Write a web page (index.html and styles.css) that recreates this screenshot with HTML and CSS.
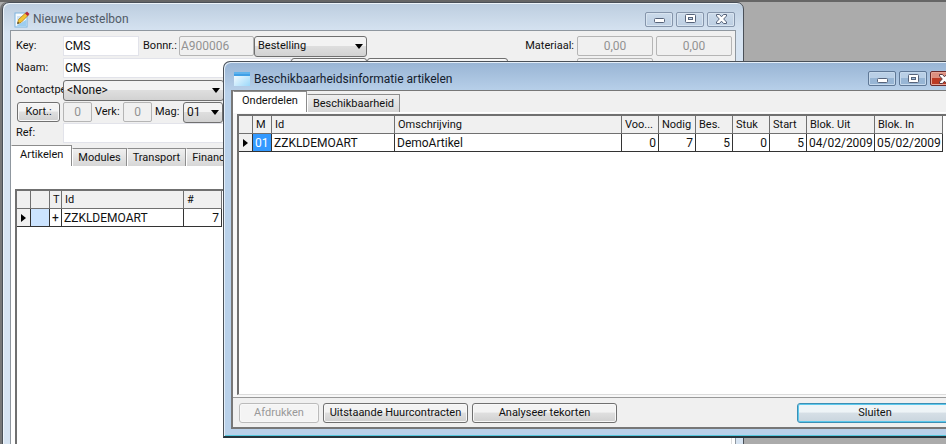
FILE: index.html
```
<!DOCTYPE html>
<html lang="nl">
<head>
  <meta charset="UTF-8">
  <title>Nieuwe bestelbon</title>
  <link rel="stylesheet" href="styles.css">
</head>
<body>
  <main class="desktop">

    <!-- order window -->
    <section class="window order">
      <header class="titlebar">
        <svg class="app-icon" width="16" height="17" viewBox="0 0 16 17">
          <rect x="1" y="2" width="12" height="14" fill="#f6fbff" stroke="#7fb4de"/>
          <path d="M3 6h6M3 8h5M3 13h8" stroke="#a9cdea"/>
          <path d="M1.500 15.500h11v-7z" fill="#9ccdf0"/>
          <path d="M3.500 12.500l1-4 7-6.500 2.500 2.500-7 7z" fill="#f4c431" stroke="#a87b1c" stroke-width=".8"/>
          <path d="M11 2.500l2-2 2.500 2.500-2 2z" fill="#b5283c"/>
          <path d="M3.300 12.700l.5-2 1.500 1.500z" fill="#333"/>
        </svg>
        <h1>Nieuwe bestelbon</h1>
        <div class="window-buttons">
          <button aria-label="Minimaliseren"><svg width="13" height="12" viewBox="0 0 13 12"><rect x="1.500" y="5.500" width="10" height="4" rx="1" fill="#fff" stroke="#56637a"/></svg></button>
          <button aria-label="Maximaliseren"><svg width="13" height="12" viewBox="0 0 13 12"><rect x="1.500" y="1.500" width="10" height="8" rx="1" fill="#fff" stroke="#56637a"/><rect x="4.500" y="4.500" width="4" height="2" fill="#c6d8ea" stroke="#56637a"/></svg></button>
          <button aria-label="Sluiten"><svg width="13" height="12" viewBox="0 0 13 12"><path d="M1.500 1.500h3l2 2.300 2-2.300h3v1.500L8.700 6l2.800 3v1.500h-3l-2-2.300-2 2.300h-3V9l2.800-3-2.800-3z" fill="#fff" stroke="#56637a"/></svg></button>
        </div>
      </header>

      <div class="client">
        <form class="order-form">
          <div class="row">
            <label class="name" for="key">Key:</label>
            <input class="w-key" id="key" type="text" value="CMS">
            <label class="bon-label" for="bon">Bonnr.:</label>
            <input class="w-bon" id="bon" type="text" value="A900006" disabled>
            <span class="select w-type"><select aria-label="Type"><option>Bestelling</option></select></span>
            <div class="totals">
              <label for="mat">Materiaal:</label>
              <input class="amount" id="mat" type="text" value="0,00" disabled>
              <input class="amount" type="text" value="0,00" aria-label="Materiaal totaal" disabled>
            </div>
          </div>
          <div class="row">
            <label class="name" for="naam">Naam:</label>
            <input class="w-naam" id="naam" type="text" value="CMS">
            <button class="btn w-key" type="button" aria-label="Zoeken"></button>
            <button class="btn w-info" type="button" aria-label="Info"></button>
            <div class="totals">
              <input class="amount" type="text" aria-label="Transport" disabled>
              <span class="amount"></span>
            </div>
          </div>
          <div class="row">
            <label class="name" for="contact">Contactpersoon:</label>
            <span class="select w-contact"><select id="contact"><option>&lt;None&gt;</option></select></span>
          </div>
          <div class="row">
            <span class="name"><button class="btn kort" type="button">Kort.:</button></span>
            <input class="num" type="text" value="0" aria-label="Korting" disabled>
            <label class="small-label" for="verk">Verk:</label>
            <input class="num" id="verk" type="text" value="0" disabled>
            <label class="small-label" for="mag">Mag:</label>
            <span class="select w-mag"><select id="mag"><option>01</option></select></span>
          </div>
          <div class="row">
            <label class="name" for="ref">Ref:</label>
            <input class="w-ref" id="ref" type="text">
          </div>
        </form>

        <nav class="tabs">
          <button class="tab active">Artikelen</button>
          <button class="tab">Modules</button>
          <button class="tab">Transport</button>
          <button class="tab">Financieel</button>
        </nav>
        <div class="tab-page order-page">
          <div class="grid-frame">
            <table class="grid order-grid">
              <colgroup><col class="c-mark"><col class="c-color"><col class="c-t"><col class="c-article"><col class="c-count"></colgroup>
              <thead>
                <tr><th></th><th></th><th>T</th><th>Id</th><th>#</th></tr>
              </thead>
              <tbody>
                <tr>
                  <td><i class="marker"></i></td>
                  <td class="blue"></td>
                  <td>+</td>
                  <td>ZZKLDEMOART</td>
                  <td class="right">7</td>
                </tr>
              </tbody>
            </table>
          </div>
        </div>
      </div>
    </section>

    <!-- availability window -->
    <section class="window stock">
      <header class="titlebar">
        <svg class="app-icon" width="16" height="14" viewBox="0 0 16 14">
          <defs>
            <linearGradient id="pane" x1="0" y1="0" x2="1" y2="1">
              <stop offset="0" stop-color="#fff"/>
              <stop offset="1" stop-color="#9bd8fa"/>
            </linearGradient>
          </defs>
          <rect width="16" height="14" fill="url(#pane)"/>
          <rect width="16" height="4" fill="#3f9fe6"/>
          <path d="M0 1h16" stroke="#7fc6f5"/>
        </svg>
        <h1>Beschikbaarheidsinformatie artikelen</h1>
        <div class="window-buttons">
          <button aria-label="Minimaliseren"><svg width="13" height="12" viewBox="0 0 13 12"><rect x="1.500" y="5.500" width="10" height="4" rx="1" fill="#fff" stroke="#56637a"/></svg></button>
          <button aria-label="Maximaliseren"><svg width="13" height="12" viewBox="0 0 13 12"><rect x="1.500" y="1.500" width="10" height="8" rx="1" fill="#fff" stroke="#56637a"/><rect x="4.500" y="4.500" width="4" height="2" fill="#9dbbd9" stroke="#56637a"/></svg></button>
          <button class="close" aria-label="Venster sluiten"><svg width="13" height="12" viewBox="0 0 13 12"><path d="M1.500 1.500h3l2 2.300 2-2.300h3v1.500L8.700 6l2.800 3v1.500h-3l-2-2.300-2 2.300h-3V9l2.800-3-2.800-3z" fill="#fff" stroke="#5a3a44"/></svg></button>
        </div>
      </header>

      <div class="client">
        <nav class="tabs">
          <button class="tab active">Onderdelen</button>
          <button class="tab">Beschikbaarheid</button>
        </nav>
        <div class="tab-page">
          <div class="grid-frame">
            <table class="grid stock-grid">
              <colgroup><col class="c-mark"><col class="c-m"><col class="c-id"><col class="c-desc"><col class="c-qty"><col class="c-qty"><col class="c-qty"><col class="c-qty"><col class="c-qty"><col class="c-date"><col class="c-date"></colgroup>
              <thead>
                <tr>
                  <th></th><th>M</th><th>Id</th><th>Omschrijving</th><th>Voo...</th><th>Nodig</th>
                  <th>Bes.</th><th>Stuk</th><th>Start</th><th>Blok. Uit</th><th>Blok. In</th>
                </tr>
              </thead>
              <tbody>
                <tr>
                  <td><i class="marker"></i></td>
                  <td class="selected">01</td>
                  <td>ZZKLDEMOART</td>
                  <td>DemoArtikel</td>
                  <td class="right">0</td>
                  <td class="right">7</td>
                  <td class="right">5</td>
                  <td class="right">0</td>
                  <td class="right">5</td>
                  <td>04/02/2009</td>
                  <td>05/02/2009</td>
                </tr>
              </tbody>
            </table>
          </div>
        </div>
        <footer class="actions">
          <button class="btn print" disabled>Afdrukken</button>
          <button class="btn action">Uitstaande Huurcontracten</button>
          <button class="btn action">Analyseer tekorten</button>
          <button class="btn default">Sluiten</button>
        </footer>
      </div>
    </section>

  </main>
</body>
</html>
```
FILE: styles.css
```
* {
  box-sizing: border-box;
}

body {
  margin: 0;
  font-family: Roboto, "Liberation Sans", sans-serif;
  font-size: 11px;
  line-height: 16px;
  color: #111;
}

button,
input,
select {
  font: inherit;
  color: inherit;
  margin: 0;
}

.desktop {
  position: relative;
  height: 100vh;
  overflow: hidden;
  background: #ababab;
  border-top: 2px solid #666;
}

/* windows */
.window {
  position: absolute;
  display: flex;
  flex-direction: column;
  border: 1px solid #4a5058;
  border-radius: 7px 7px 0 0;
}

.order {
  left: 2px;
  right: 202px;
  top: 0;
  bottom: -16px;
  padding: 0 7px 7px;
  background: linear-gradient(#bccddf, #d7e4f2 30px);
  box-shadow: inset 1px 1px #edf4fa, -2px 0 #777;
}

.stock {
  left: 223px;
  right: -21px;
  top: 59px;
  bottom: 6px;
  padding: 0 7px 7px;
  background: linear-gradient(#98b4d4, #b9d1ea 30px);
  border-bottom: 2px solid #26363e;
  box-shadow: inset 1px 1px #e4eef8, inset 0 -1px #54c8de;
}

.titlebar {
  display: flex;
  align-items: center;
  height: 27px;
  padding: 5px 0 0 4px;
}

.titlebar h1 {
  flex: 1;
  margin: 0 0 0 3px;
  font-size: 12px;
  font-weight: 400;
  color: #505a66;
}

.stock .titlebar h1 {
  color: #14202e;
  margin-left: 4px;
}

.stock .titlebar {
  height: 28px;
  padding-left: 3px;
}

.window-buttons {
  display: flex;
  gap: 3px;
  padding-right: 1px;
}

.window-buttons button {
  display: flex;
  align-items: center;
  justify-content: center;
  width: 28px;
  height: 15px;
  padding: 0;
  border: 1px solid #8595ab;
  border-radius: 2px;
  background: linear-gradient(#cbdaea, #bccee2);
  box-shadow: inset 0 0 0 1px #d8e4f0;
}

.stock .window-buttons button {
  border-color: #5f7896;
  background: linear-gradient(#b9cfe6 50%, #98b6d5 50%);
  box-shadow: inset 0 0 0 1px #c6d9ec;
}

.stock .window-buttons .close {
  border-color: #6b2a2c;
  background: linear-gradient(#dc8f80 50%, #bb3a24 50%);
  box-shadow: inset 0 0 0 1px #e5a597;
}

.client {
  flex: 1;
  display: flex;
  flex-direction: column;
  min-height: 0;
  border: 1px solid #8f979f;
  background: #f0f0f0;
}

.stock .client {
  border: 2px solid #777;
  border-width: 1px 2px 2px;
}

/* order form */
.order-form {
  padding: 4px 3px 2px 5px;
}

.row {
  display: flex;
  align-items: center;
  height: 22px;
}

.row:last-child {
  height: 20px;
}

.name {
  flex: none;
  width: 47px;
  overflow: hidden;
  white-space: nowrap;
}

input {
  height: 20px;
  min-width: 0;
  padding: 0 1px;
  border: 1px solid #e2e3ea;
  background: #fff;
  font-size: 12px;
}

input:disabled {
  border-color: #b5b5b5;
  border-radius: 2px;
  background: #f0f0f0;
  color: #929292;
}

.w-key { width: 76px; }
.w-bon { width: 75px; }
.w-type { width: 113px; }
.w-naam { width: 228px; }
.w-info { width: 141px; }
.w-contact { width: 161px; }
.w-mag { width: 40px; }
.w-ref { width: 228px; }

.bon-label {
  width: 40px;
  padding-left: 4px;
}

.num {
  width: 29px;
  text-align: center;
}

.small-label {
  width: 31px;
  padding-left: 3px;
}

.totals {
  display: flex;
  align-items: center;
  gap: 3px;
  margin-left: auto;
}

.amount {
  width: 76px;
  text-align: center;
}

.select {
  position: relative;
  display: block;
}

.select::after {
  content: "";
  position: absolute;
  right: 4px;
  top: 8px;
  border: 4px solid transparent;
  border-top: 5px solid #000;
  border-bottom: 0;
  pointer-events: none;
}

.select select {
  display: block;
  appearance: none;
  width: 100%;
  height: 21px;
  padding: 0 3px;
  border: 1px solid #707070;
  border-radius: 3px;
  background: linear-gradient(#f3f3f3 50%, #dedede 50%, #d2d2d2);
}

.w-contact select,
.w-mag select {
  font-size: 12px;
}

.btn {
  height: 20px;
  padding: 0 4px;
  border: 1px solid #707070;
  border-radius: 3px;
  background: linear-gradient(#f3f3f3 45%, #dfdfdf 50%, #d0d0d0);
  box-shadow: inset 0 0 0 1px #f8f8f8;
  white-space: nowrap;
}

.kort {
  display: block;
  width: 43px;
  margin-left: 1px;
}

/* tabs */
.tabs {
  display: flex;
  align-items: flex-end;
  height: 21px;
}

.tab {
  height: 18px;
  padding: 0 5px;
  border: 1px solid #8c8c8c;
  border-left-color: #fff;
  border-bottom: 0;
  background: linear-gradient(#f0f0f0, #d6d6d6);
}

.tab.active {
  height: 21px;
  padding: 0 8px 3px;
  background: #fff;
}

.tab-page {
  flex: 1;
  display: flex;
  min-height: 0;
  padding: 1px 3px 2px 4px;
  border-top: 1px solid #fff;
  border-bottom: 1px solid #999;
  background: #f8f8f8;
}

.order-page {
  padding-top: 22px;
  background: #fff;
}

.grid-frame {
  flex: 1;
  overflow: hidden;
  border: 1px solid #dcdcdc;
  border-top: 2px solid #707070;
  border-left: 2px solid #707070;
  background: #fff;
}

/* data grids */
.grid {
  table-layout: fixed;
  width: 0;
  border-collapse: separate;
  border-spacing: 0;
}

.grid th,
.grid td {
  height: 18px;
  padding: 0 2px;
  border: 1px solid #333;
  border-top: 0;
  border-left: 0;
  line-height: 16px;
  font-size: 12px;
  font-weight: 400;
  text-align: left;
  white-space: nowrap;
  overflow: hidden;
}

.grid th {
  padding: 0 3px;
  background: #f0f0f0;
  border-color: #707070;
  font-size: 11px;
}

.grid td.right {
  text-align: right;
}

.grid td:first-child {
  background: #f0f0f0;
}

.grid td.blue {
  background: #cce4ff;
}

.grid td.selected {
  background: #3399ff;
  color: #fff;
}

.marker {
  display: block;
  width: 5px;
  margin-left: 2px;
  border: 4px solid transparent;
  border-left: 5px solid #000;
  border-right: 0;
}

.c-mark { width: 14px; }
.c-color { width: 19px; }
.c-t { width: 12px; }
.c-m { width: 19px; }
.c-id { width: 123px; }
.c-article { width: 122px; }
.c-count { width: 38px; }
.c-desc { width: 227px; }
.c-qty { width: 37px; }
.c-date { width: 68px; }

/* bottom buttons */
.actions {
  display: flex;
  gap: 4px;
  padding: 5px 4px 4px 6px;
}

.print {
  width: 80px;
}

.print:disabled {
  border-color: #bbb;
  background: #f4f4f4;
  color: #999;
}

.action {
  width: 145px;
}

.default {
  width: 156px;
  margin-left: auto;
  border-color: #3c8fb5;
  background: linear-gradient(#eef4f7 45%, #d6dfe6 50%, #c9d5de);
  box-shadow: inset 0 0 0 1px #5cc8ec;
}
```
